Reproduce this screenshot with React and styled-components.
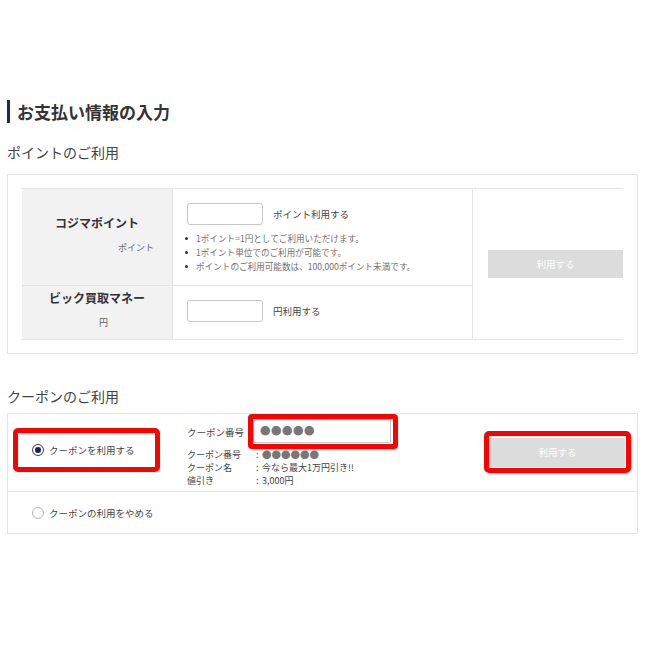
import React from 'react';
import styled, { createGlobalStyle } from 'styled-components';

const GlobalStyle = createGlobalStyle`
  * { box-sizing: border-box; }
  body {
    margin: 0;
    background: #ffffff;
    font-family: "Noto Sans CJK JP", "Liberation Sans", sans-serif;
    color: #333;
  }
`;

const bullets = [
  '1ポイント=1円としてご利用いただけます。',
  '1ポイント単位でのご利用が可能です。',
  'ポイントのご利用可能数は、100,000ポイント未満です。',
];

const couponDetails = [
  { label: 'クーポン番号', value: '●●●●●●', dots: true },
  { label: 'クーポン名', value: '今なら最大1万円引き!!' },
  { label: '値引き', value: '3,000円' },
];

const App = () => (
  <>
    <GlobalStyle />
    <Page>
      <Heading>お支払い情報の入力</Heading>

      <SubTitle $top={19}>ポイントのご利用</SubTitle>
      <PointsBox>
        <PointsTable>
          <HeadCell $first>
            <HeadTitle>コジマポイント</HeadTitle>
            <HeadSub $align="right">ポイント</HeadSub>
          </HeadCell>
          <InputCell $first>
            <InputRow>
              <TextInput type="text" />
              <InputNote>ポイント利用する</InputNote>
            </InputRow>
            <NoteList>
              {bullets.map((b) => (
                <li key={b}>{b}</li>
              ))}
            </NoteList>
          </InputCell>
          <ActionCell>
            <UseButton>利用する</UseButton>
          </ActionCell>

          <HeadCell $top={4}>
            <HeadTitle>ビック買取マネー</HeadTitle>
            <HeadSub $align="center">円</HeadSub>
          </HeadCell>
          <InputCell>
            <InputRow>
              <TextInput type="text" />
              <InputNote>円利用する</InputNote>
            </InputRow>
          </InputCell>
        </PointsTable>
      </PointsBox>

      <SubTitle $top={32}>クーポンのご利用</SubTitle>
      <CouponBox>
        <CouponRow>
          <RadioHighlight>
            <Radio $checked />
            <RadioLabel>クーポンを利用する</RadioLabel>
          </RadioHighlight>

          <CouponFields>
            <FieldRow>
              <FieldLabel>クーポン番号</FieldLabel>
              <InputHighlight>
                <CodeInput>●●●●●</CodeInput>
              </InputHighlight>
            </FieldRow>
            <Details>
              {couponDetails.map((d) => (
                <React.Fragment key={d.label}>
                  <span>{d.label}</span>
                  <span>:</span>
                  <DetailValue $dots={d.dots}>{d.value}</DetailValue>
                </React.Fragment>
              ))}
            </Details>
          </CouponFields>

          <ButtonHighlight>
            <UseButton $height={29}>利用する</UseButton>
          </ButtonHighlight>
        </CouponRow>
        <CancelRow>
          <Radio />
          <RadioLabel>クーポンの利用をやめる</RadioLabel>
        </CancelRow>
      </CouponBox>
    </Page>
  </>
);

export default App;

const Page = styled.div`
  width: 646px;
  padding: 100px 8px 0 7px;
`;

const Heading = styled.h1`
  margin: 0;
  height: 23px;
  line-height: 23px;
  border-left: 3px solid #24246b;
  padding-left: 7px;
  font-size: 17px;
  font-weight: bold;
  color: #333;
`;

const SubTitle = styled.h2`
  margin: ${(p) => p.$top}px 0 0;
  height: 20px;
  line-height: 20px;
  font-size: 14px;
  font-weight: normal;
  color: #444;
`;

const PointsBox = styled.div`
  margin-top: 12px;
  width: 631px;
  border: 1px solid #e4e4e4;
  padding: 13px 14px 13px 14px;
`;

const PointsTable = styled.div`
  display: grid;
  grid-template-columns: 151px 300px 150px;
  grid-template-rows: 97px 53px;
  border-top: 1px solid #e4e4e4;
  border-bottom: 1px solid #e4e4e4;
`;

const HeadCell = styled.div`
  display: flex;
  flex-direction: column;
  background: #f2f2f2;
  border-right: 1px solid #e4e4e4;
  border-bottom: ${(p) => (p.$first ? '1px solid #e4e4e4' : 'none')};
  padding-top: ${(p) => (p.$top ?? 26)}px;
`;

const HeadTitle = styled.div`
  text-align: center;
  font-size: 12px;
  line-height: 16px;
  font-weight: bold;
  color: #333;
`;

const HeadSub = styled.div`
  margin-top: 11px;
  font-size: 9px;
  line-height: 12px;
  color: #666;
  text-align: ${(p) => p.$align};
  padding-right: ${(p) => (p.$align === 'right' ? '18px' : '0')};
  padding-left: ${(p) => (p.$align === 'center' ? '13px' : '0')};
`;

const InputCell = styled.div`
  border-right: 1px solid #e4e4e4;
  border-bottom: ${(p) => (p.$first ? '1px solid #e4e4e4' : 'none')};
  padding: 14px 0 0 14px;
`;

const InputRow = styled.div`
  display: flex;
  align-items: center;
  gap: 10px;
`;

const TextInput = styled.input`
  width: 76px;
  height: 22px;
  border: 1px solid #c8c8c8;
  border-radius: 3px;
  background: #fff;
  padding: 0 4px;
  outline: none;
`;

const InputNote = styled.span`
  font-size: 9.5px;
  color: #444;
`;

const NoteList = styled.ul`
  list-style: none;
  margin: 6px 0 0 -2px;
  padding: 0;

  li {
    position: relative;
    padding-left: 11px;
    font-size: 8.6px;
    line-height: 14px;
    color: #776f6a;
    white-space: nowrap;
  }

  li::before {
    content: '';
    position: absolute;
    left: 0;
    top: 6px;
    width: 3px;
    height: 3px;
    border-radius: 50%;
    background: #333;
  }
`;

const ActionCell = styled.div`
  grid-column: 3;
  grid-row: 1 / span 2;
  display: flex;
  align-items: center;
  justify-content: flex-end;
`;

const UseButton = styled.button`
  width: 135px;
  height: ${(p) => p.$height ?? 28}px;
  border: none;
  background: #dcdcdc;
  color: #fff;
  font-family: inherit;
  font-size: 9.5px;
  padding: 0;
  cursor: default;
`;

const CouponBox = styled.div`
  margin-top: 7px;
  width: 631px;
  border: 1px solid #e4e4e4;
`;

const CouponRow = styled.div`
  display: flex;
  align-items: flex-start;
  height: 78px;
  border-bottom: 1px solid #e4e4e4;
`;

const RadioHighlight = styled.div`
  display: flex;
  align-items: center;
  gap: 5px;
  width: 147px;
  height: 44px;
  margin: 14px 0 0 5px;
  padding-left: 14px;
  border: 5px solid #ff0000;
  border-radius: 5px;
`;

const Radio = styled.span`
  position: relative;
  flex: none;
  width: 12px;
  height: 12px;
  border-radius: 50%;
  border: 1px solid ${(p) => (p.$checked ? '#3b3f6e' : '#b5b5b5')};
  background: #fff;

  &::after {
    content: '';
    display: ${(p) => (p.$checked ? 'block' : 'none')};
    position: absolute;
    left: 2px;
    top: 2px;
    width: 6px;
    height: 6px;
    border-radius: 50%;
    background: #1b1f5e;
  }
`;

const RadioLabel = styled.span`
  font-size: 9.5px;
  color: #444;
  white-space: nowrap;
`;

const CouponFields = styled.div`
  display: flex;
  flex-direction: column;
  margin-left: 27px;
`;

const FieldRow = styled.div`
  display: flex;
  align-items: center;
`;

const FieldLabel = styled.span`
  width: 61px;
  font-size: 9.5px;
  color: #444;
  white-space: nowrap;
`;

const InputHighlight = styled.div`
  border: 5px solid #ff0000;
  border-radius: 4px;
  padding: 0 2px 1px 0;
`;

const CodeInput = styled.div`
  width: 138px;
  height: 24px;
  border: 1px solid #c8c8c8;
  border-radius: 2px;
  padding-left: 6px;
  font-size: 10.5px;
  line-height: 22px;
  letter-spacing: 0.5px;
  color: #777;
`;

const Details = styled.div`
  display: grid;
  grid-template-columns: 69px 6px auto;
  margin-top: -1px;
  font-size: 9px;
  line-height: 13px;
  color: #444;
  white-space: nowrap;
`;

const DetailValue = styled.span`
  color: ${(p) => (p.$dots ? '#777' : '#444')};
  font-size: ${(p) => (p.$dots ? '9.5px' : '9px')};
`;

const ButtonHighlight = styled.div`
  margin: 17px 6px 0 auto;
  border: 5px solid #ff0000;
  border-radius: 5px;
  padding: 1px;
`;

const CancelRow = styled.div`
  display: flex;
  align-items: center;
  gap: 5px;
  height: 41px;
  padding-left: 24px;
`;
